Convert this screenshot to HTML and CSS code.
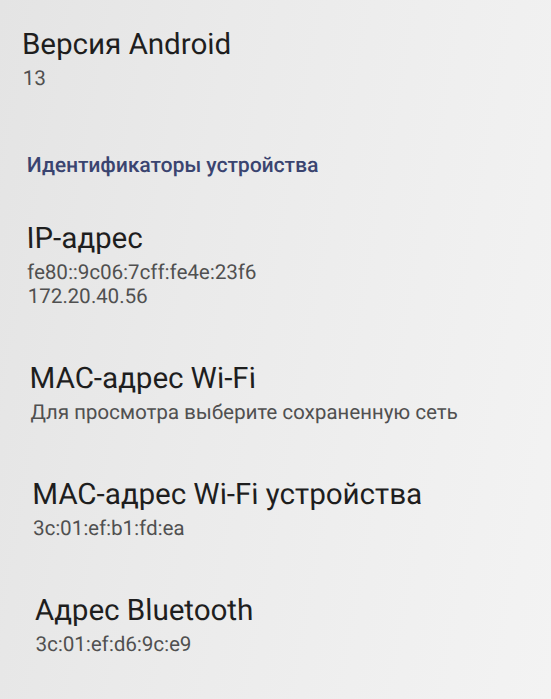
FILE: index.html
```html
<!DOCTYPE html>
<html lang="ru">
<head>
<meta charset="utf-8">
<title>Об устройстве</title>
<link rel="stylesheet" href="styles.css">
</head>
<body>
<main class="screen">
  <div class="list">
    <section class="item">
      <div class="title">Версия Android</div>
      <div class="summary">13</div>
    </section>
    <h2 class="category">Идентификаторы устройства</h2>
    <section class="item">
      <div class="title">IP-адрес</div>
      <div class="summary">fe80::9c06:7cff:fe4e:23f6<br>172.20.40.56</div>
    </section>
    <section class="item">
      <div class="title">MAC-адрес Wi-Fi</div>
      <div class="summary">Для просмотра выберите сохраненную сеть</div>
    </section>
    <section class="item">
      <div class="title">MAC-адрес Wi-Fi устройства</div>
      <div class="summary">3c:01:ef:b1:fd:ea</div>
    </section>
    <section class="item">
      <div class="title">Адрес Bluetooth</div>
      <div class="summary">3c:01:ef:d6:9c:e9</div>
    </section>
  </div>
</main>
</body>
</html>
```
FILE: styles.css
```css
html, body {
  margin: 0;
  padding: 0;
  height: 100%;
}
body {
  font-family: Roboto, "Noto Sans", "Liberation Sans", sans-serif;
  background: linear-gradient(100deg, #e4e4e4 0%, #eaeaea 35%, #efefef 70%, #f3f3f3 100%);
  overflow: hidden;
}
.screen {
  width: 551px;
  height: 699px;
}
.list {
  display: flex;
  flex-direction: column;
  padding-left: 21px;
  transform: skewX(1.3deg);
  transform-origin: 0 0;
}
.item {
  display: flex;
  flex-direction: column;
  padding: 26px 0;
}
.title {
  font-size: 29.5px;
  line-height: 36px;
  color: #1e1e1e;
  font-weight: 400;
}
.summary {
  margin-top: 4px;
  font-size: 20.5px;
  line-height: 24px;
  color: #505050;
}
.category {
  margin: 0;
  padding: 37px 0 17px 2px;
  font-size: 21px;
  line-height: 24px;
  font-weight: 500;
  color: #3a4470;
}
```
